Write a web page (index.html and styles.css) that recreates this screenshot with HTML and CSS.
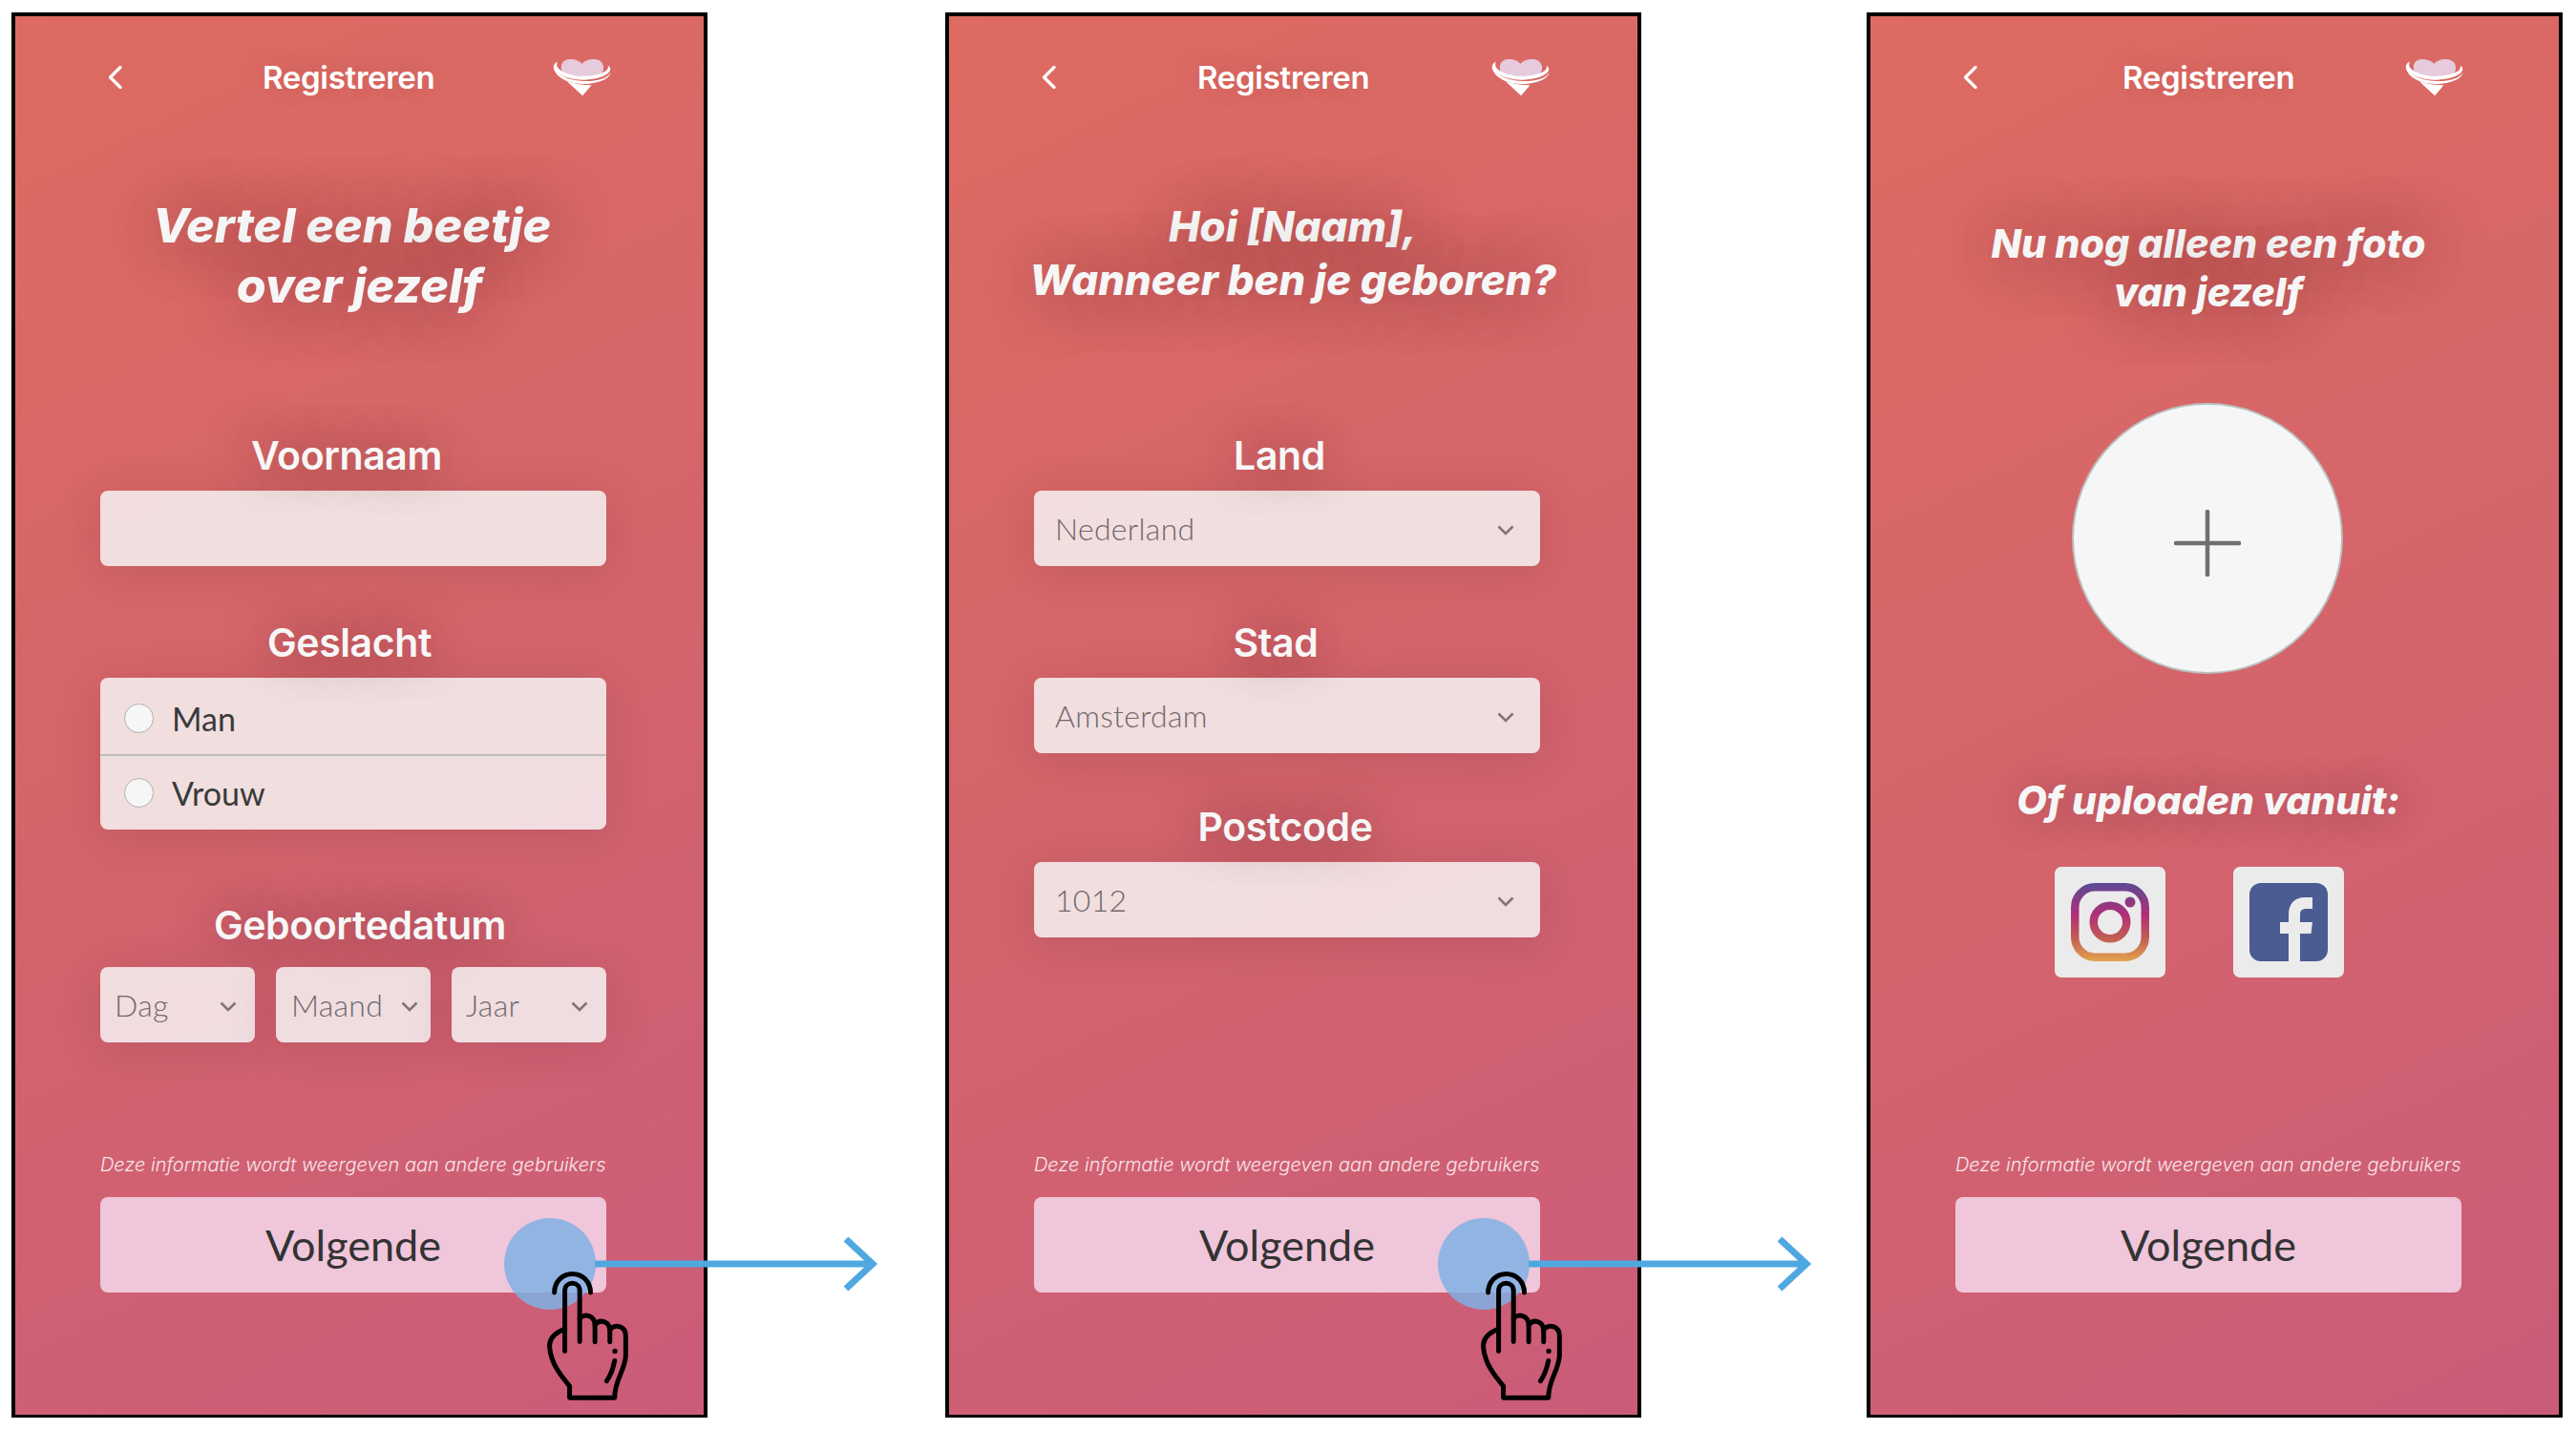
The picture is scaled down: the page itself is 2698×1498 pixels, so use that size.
FILE: index.html
```html
<!DOCTYPE html>
<html lang="en">
<head>
    <meta charset="UTF-8">
    <title>Registreren</title>
    <link rel="stylesheet" href="styles.css">
</head>
<body>
    <svg class="defs" width="0" height="0">
        <defs>
            <symbol id="chevron" viewBox="0 0 18 11"><path d="M1.5 1.5 9 9l7.500-7.500" fill="none" stroke="#7d7678" stroke-width="2.600"/></symbol>
            <symbol id="back" viewBox="0 0 15 24"><path d="M13 1.500 2.500 12 13 22.500" fill="none" stroke="#fff" stroke-width="3.200" stroke-linecap="round" stroke-linejoin="round"/></symbol>
            <symbol id="logo" viewBox="100 80 220 150">
                <path d="M145 128c-3-20 12-30 27-30 18 0 30 6 38 14 8-8 20-14 38-14 18 0 32 12 30 30-1 8-5 15-9 22-40 5-75 5-113 0-6-7-10-14-11-22z" fill="#e5cbdc"/>
                <path d="M133 105c-15 7-17 22-4 33 18 16 55 26 88 25 38-1 70-12 80-26 5-8 3-15-5-19 3 8-2 15-14 21-18 9-50 14-78 12-28-2-60-14-68-30-2-6-2-11 1-16z" fill="#fff"/>
                <path d="M120 122c8 24 50 44 95 45 40 1 78-8 85-28-1 20-38 36-84 37-50 1-92-22-96-54z" fill="#fff"/>
                <path d="M163 168c24 8 52 12 77 12l-28 33z" fill="#fff"/>
            </symbol>
            <symbol id="hand" viewBox="390 445 280 430">
                <g fill="none" stroke="#000" stroke-width="15" stroke-linecap="round" stroke-linejoin="round">
                    <path d="M422 523c0-34 25-59 57-59s57 25 57 59"/>
                    <path d="M455 708V518c0-32 47-32 47 0v160"/>
                    <path d="M502 605c14-18 48-10 48 22v52"/>
                    <path d="M550 625c14-20 47-12 47 18v36"/>
                    <path d="M597 640c14-20 50-12 50 20v62c-3 50-35 75-35 133H470v-37c-25-30-58-68-63-122-2-30 22-48 48-58"/>
                    <path d="M612 738c-5 25-12 45-25 64"/>
                </g>
                <circle cx="613" cy="708" r="8"/>
            </symbol>
        </defs>
    </svg>

    <section class="screen screen-one">
        <header class="topbar">
            <svg class="back"><use href="#back"/></svg>
            <span class="topbar-title">Registreren</span>
            <svg class="brand"><use href="#logo"/></svg>
        </header>
        <h1 class="title">Vertel een beetje<br><span class="title-shift">over jezelf</span></h1>

        <div class="field">
            <div class="label label-voornaam">Voornaam</div>
            <div class="box"></div>
        </div>
        <div class="field">
            <div class="label label-geslacht">Geslacht</div>
            <div class="box radios">
                <div class="radio-row"><span class="radio"></span>Man</div>
                <div class="radio-row"><span class="radio"></span>Vrouw</div>
            </div>
        </div>
        <div class="field field-date">
            <div class="label label-datum">Geboortedatum</div>
            <div class="date-row">
                <div class="box select small">Dag<svg class="chevron"><use href="#chevron"/></svg></div>
                <div class="box select small tight">Maand<svg class="chevron"><use href="#chevron"/></svg></div>
                <div class="box select small">Jaar<svg class="chevron"><use href="#chevron"/></svg></div>
            </div>
        </div>

        <footer class="foot">
            <p class="note">Deze informatie wordt weergeven aan andere gebruikers</p>
            <div class="next">Volgende</div>
        </footer>

        <span class="touch"></span>
        <svg class="arrow" viewBox="0 0 300 62"><path d="M0 31H290M263 5l28 26-28 26" fill="none" stroke="#4fa8df" stroke-width="7"/></svg>
        <svg class="finger"><use href="#hand"/></svg>
    </section>

    <section class="screen screen-two">
        <header class="topbar">
            <svg class="back"><use href="#back"/></svg>
            <span class="topbar-title">Registreren</span>
            <svg class="brand"><use href="#logo"/></svg>
        </header>
        <h1 class="title">Hoi [Naam],<br>Wanneer ben je geboren?</h1>

        <div class="field">
            <div class="label label-land">Land</div>
            <div class="box select">Nederland<svg class="chevron"><use href="#chevron"/></svg></div>
        </div>
        <div class="field">
            <div class="label label-stad">Stad</div>
            <div class="box select">Amsterdam<svg class="chevron"><use href="#chevron"/></svg></div>
        </div>
        <div class="field field-code">
            <div class="label label-code">Postcode</div>
            <div class="box select">1012<svg class="chevron"><use href="#chevron"/></svg></div>
        </div>

        <footer class="foot">
            <p class="note">Deze informatie wordt weergeven aan andere gebruikers</p>
            <div class="next">Volgende</div>
        </footer>

        <span class="touch"></span>
        <svg class="arrow" viewBox="0 0 300 62"><path d="M0 31H290M263 5l28 26-28 26" fill="none" stroke="#4fa8df" stroke-width="7"/></svg>
        <svg class="finger"><use href="#hand"/></svg>
    </section>

    <section class="screen screen-three">
        <header class="topbar">
            <svg class="back"><use href="#back"/></svg>
            <span class="topbar-title">Registreren</span>
            <svg class="brand"><use href="#logo"/></svg>
        </header>
        <h1 class="title">Nu nog alleen een foto<br>van jezelf</h1>

        <div class="photo">
            <svg class="plus" viewBox="0 0 70 70"><path d="M35 2v66M2 35h66" fill="none" stroke="#6f6f6f" stroke-width="4.500" stroke-linecap="round"/></svg>
        </div>
        <div class="upload">Of uploaden vanuit:</div>
        <div class="socials">
            <div class="social">
                <svg viewBox="0 0 82 82" width="82" height="82">
                    <defs>
                        <linearGradient id="insta" gradientUnits="userSpaceOnUse" x1="0" y1="0" x2="0" y2="82">
                            <stop offset="0" stop-color="#5a4a94"/>
                            <stop offset=".4" stop-color="#b02f78"/>
                            <stop offset=".7" stop-color="#c25c55"/>
                            <stop offset="1" stop-color="#e3a34c"/>
                        </linearGradient>
                    </defs>
                    <rect x="4.250" y="4.250" width="73.500" height="73.500" rx="21" fill="none" stroke="url(#insta)" stroke-width="8.500"/>
                    <circle cx="41" cy="41" r="17.250" fill="none" stroke="url(#insta)" stroke-width="8.500"/>
                    <circle cx="62" cy="20" r="5.500" fill="url(#insta)"/>
                </svg>
            </div>
            <div class="social">
                <svg viewBox="0 0 82 82" width="82" height="82">
                    <rect width="82" height="82" rx="12" fill="#4a5c91"/>
                    <path d="M41 82V53h-9V41h9v-8c0-12 7-18 17-18h8v12h-6c-5 0-7 2-7 6v8h13l-1.500 12H53v29z" fill="#ebebeb"/>
                </svg>
            </div>
        </div>

        <footer class="foot">
            <p class="note">Deze informatie wordt weergeven aan andere gebruikers</p>
            <div class="next">Volgende</div>
        </footer>
    </section>
</body>
</html>
```

FILE: styles.css
```css
* {
    box-sizing: border-box;
}

body {
    margin: 0;
    padding: 13px 0 0 12px;
    display: flex;
    background: #fff;
    font-family: Lato, sans-serif;
    color: #fff;
}

.defs {
    position: absolute;
}

.screen {
    position: relative;
    flex: none;
    display: flex;
    flex-direction: column;
    width: 729px;
    height: 1472px;
    padding: 0 102px 0 89px;
    border: 4px solid #000;
    border-bottom-width: 3px;
    background: linear-gradient(155deg, #de6b61 0%, #d5656a 45%, #cb5c79 100%);
}

.screen-one {
    margin-right: 249px;
}

.screen-two {
    margin-right: 236px;
}

/* header */
.topbar {
    display: flex;
    align-items: center;
    flex: none;
    height: 128px;
    margin: 0 -102px 0 -89px;
    padding-left: 97px;
}

.back {
    width: 15px;
    height: 24px;
    margin-right: 147px;
}

.topbar-title {
    font-family: Inter, sans-serif;
    font-size: 33px;
    font-weight: 600;
    letter-spacing: -.3px;
    text-shadow: 0 0 30px rgba(90, 30, 30, .15);
}

.brand {
    width: 73px;
    height: 50px;
    margin-left: auto;
    margin-right: 91px;
}

.screen-two .back {
    margin-right: 148px;
}

.screen-two .brand {
    margin-right: 86px;
}

.screen-three .back {
    margin-right: 152px;
}

.screen-three .brand {
    margin-right: 94px;
}

/* big italic heading */
.title {
    flex: none;
    height: 308px;
    margin: 0;
    padding-top: 60px;
    font-family: Inter, sans-serif;
    font-size: 50px;
    line-height: 63px;
    font-style: italic;
    font-weight: 800;
    text-align: center;
    color: #f6f6f6;
    text-shadow: 0 0 60px rgba(80, 30, 40, .5);
}

.title-shift {
    padding-left: 16px;
}

.screen-one .title {
    padding-right: 3px;
    margin: 0 -40px;
}

.screen-two .title {
    margin: 0 -40px 0 -40px;
    padding: 65px 0 0 12px;
    font-size: 43.700px;
    line-height: 56px;
}

.screen-three .title {
    height: 277px;
    margin: 0 -40px;
    padding: 85px 0 0 0;
    font-size: 41.200px;
    line-height: 51px;
}

/* form */
.field {
    flex: none;
    margin-bottom: 56px;
}

.field-date {
    margin-top: 20px;
}

.field-code {
    margin-top: -3px;
}

.label {
    height: 48px;
    margin-bottom: 13px;
    font-family: Inter, sans-serif;
    font-size: 41px;
    line-height: 48px;
    font-weight: 600;
    letter-spacing: -.4px;
    text-align: center;
    color: #f7f7f7;
    text-shadow: 0 0 45px rgba(80, 30, 40, .5);
}

.label-voornaam {
    padding-right: 14px;
}

.label-geslacht {
    padding-right: 8px;
}

.label-datum {
    margin-bottom: 20px;
    padding-left: 14px;
}

.label-land {
    padding-right: 16px;
}

.label-stad {
    padding-right: 24px;
}

.label-code {
    padding-right: 4px;
}

.box {
    height: 79px;
    border-radius: 8px;
    background: rgba(247, 247, 247, .83);
    box-shadow: 0 6px 45px rgba(80, 30, 40, .16);
}

.select {
    display: flex;
    align-items: center;
    justify-content: space-between;
    padding: 0 27px 0 22px;
    font-size: 32px;
    font-weight: 300;
    letter-spacing: .3px;
    color: #6f696b;
}

.select.small {
    flex: none;
    width: 162px;
    padding: 0 19px 0 15px;
}

.select.tight {
    padding: 0 13px 0 16px;
}

.chevron {
    width: 18px;
    height: 11px;
    margin-top: 4px;
}

.date-row {
    display: flex;
    gap: 22px;
}

.radios {
    height: 159px;
}

.radio-row {
    display: flex;
    align-items: center;
    height: 80px;
    padding: 5px 0 0 25px;
    font-size: 34px;
    color: #3a3a3a;
}

.radio-row + .radio-row {
    height: 79px;
    padding-top: 0;
    border-top: 2px solid #bdbdbd;
}

.radio {
    width: 31px;
    height: 31px;
    margin-right: 19px;
    border: 1px solid #b0b0b0;
    border-radius: 50%;
    background: #f6f6f6;
}

/* footer */
.foot {
    margin-top: auto;
    padding-bottom: 128px;
}

.note {
    margin: 0 0 17px;
    font-family: Inter, sans-serif;
    font-size: 20px;
    line-height: 34px;
    font-style: italic;
    font-weight: 300;
    white-space: nowrap;
    color: #f8e6ea;
}

.next {
    height: 100px;
    border-radius: 8px;
    background: #f0c6da;
    font-size: 45px;
    line-height: 100px;
    text-align: center;
    color: #333;
}

/* tap gesture, lies over the button */
.touch {
    position: absolute;
    left: 512px;
    top: 1259px;
    width: 96px;
    height: 96px;
    border-radius: 50%;
    background: rgba(128, 176, 228, .85);
}

.arrow {
    position: absolute;
    left: 607px;
    top: 1276px;
    width: 300px;
    height: 62px;
}

.finger {
    position: absolute;
    left: 554px;
    top: 1311px;
    width: 93px;
    height: 143px;
}

/* photo screen */
.photo {
    display: flex;
    align-items: center;
    justify-content: center;
    flex: none;
    width: 284px;
    height: 284px;
    margin-left: 122px;
    border: 2px solid #b9bebe;
    border-radius: 50%;
    background: #f6f6f6;
}

.plus {
    width: 70px;
    height: 70px;
    margin-top: 10px;
}

.upload {
    flex: none;
    height: 48px;
    margin: 108px -40px 0;
    font-family: Inter, sans-serif;
    font-size: 40.800px;
    line-height: 48px;
    font-style: italic;
    font-weight: 800;
    text-align: center;
    color: #f6f6f6;
    text-shadow: 0 0 40px rgba(80, 30, 40, .35);
}

.socials {
    display: flex;
    gap: 71px;
    flex: none;
    margin: 46px 0 0 104px;
}

.social {
    display: flex;
    align-items: center;
    justify-content: center;
    width: 116px;
    height: 116px;
    border-radius: 7px;
    background: #ebebeb;
}
```
